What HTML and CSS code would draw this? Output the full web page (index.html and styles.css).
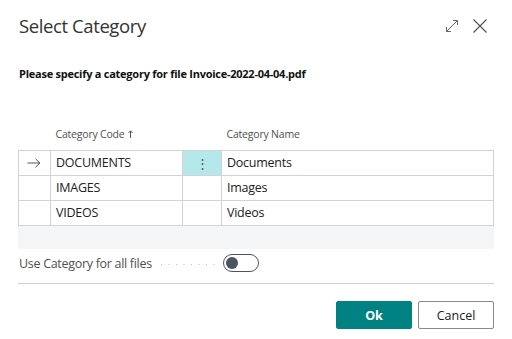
FILE: index.html
```html
<!DOCTYPE html>
<html lang="en">
<head>
    <meta charset="UTF-8">
    <meta name="viewport" content="width=device-width, initial-scale=1.0">
    <title>Select Category</title>
    <link rel="stylesheet" href="styles.css">
</head>
<body>
    <div class="dialog">
        <div class="dialog-header">
            <h1 class="title">Select Category</h1>
            <div class="header-actions">
                <!-- expand icon -->
                <svg class="icon" width="16" height="16" viewBox="0 0 16 16">
                    <path d="M2.5 13.5 L13.5 2.5 M9 2.5 H13.5 V7 M2.5 9 V13.5 H7" fill="none" stroke="#666" stroke-width="1"/>
                </svg>
                <!-- close icon -->
                <svg class="icon" width="16" height="16" viewBox="0 0 16 16">
                    <path d="M1.5 1.5 L14.5 14.5 M14.5 1.5 L1.5 14.5" fill="none" stroke="#555" stroke-width="1.2"/>
                </svg>
            </div>
        </div>

        <p class="instruction">Please specify a category for file Invoice-2022-04-04.pdf</p>

        <div class="grid-wrap">
            <table class="grid">
                <colgroup>
                    <col class="w-mark">
                    <col class="w-code">
                    <col class="w-menu">
                    <col>
                </colgroup>
                <thead>
                    <tr>
                        <th></th>
                        <th>Category Code
                            <svg class="sort" width="5" height="8" viewBox="0 0 5 8">
                                <path d="M2.5 8 V1 M0.5 3 L2.5 0.8 L4.5 3" fill="none" stroke="#555" stroke-width="1"/>
                            </svg>
                        </th>
                        <th></th>
                        <th>Category Name</th>
                    </tr>
                </thead>
                <tbody>
                    <tr>
                        <td class="mark">
                            <svg width="14" height="10" viewBox="0 0 14 10">
                                <path d="M0.5 5 H13 M8.5 0.8 L13 5 L8.5 9.2" fill="none" stroke="#555" stroke-width="1"/>
                            </svg>
                        </td>
                        <td>DOCUMENTS</td>
                        <td class="menu active"><span class="dots">&#8942;</span></td>
                        <td>Documents</td>
                    </tr>
                    <tr>
                        <td class="mark"></td>
                        <td>IMAGES</td>
                        <td class="menu"></td>
                        <td>Images</td>
                    </tr>
                    <tr>
                        <td class="mark"></td>
                        <td>VIDEOS</td>
                        <td class="menu"></td>
                        <td>Videos</td>
                    </tr>
                </tbody>
            </table>
            <div class="grid-footer"></div>
        </div>

        <div class="field">
            <span class="field-label">Use Category for all files</span>
            <span class="leader"></span>
            <span class="toggle"><span class="knob"></span></span>
        </div>

        <div class="dialog-footer">
            <button class="btn btn-primary">Ok</button>
            <button class="btn">Cancel</button>
        </div>
    </div>
</body>
</html>
```

FILE: styles.css
```css
body {
    margin: 0;
    background-color: #ffffff;
    font-family: 'Open Sans', 'Liberation Sans', sans-serif;
    color: #212121;
}

.dialog {
    width: 512px;
    height: 339px;
    padding: 0 18px;
    box-sizing: border-box;
}

.dialog-header {
    display: flex;
    justify-content: space-between;
    align-items: center;
    height: 50px;
}

.title {
    margin: 0 0 0 1px;
    font-size: 18.5px;
    font-weight: 400;
    color: #333333;
    letter-spacing: -0.4px;
}

.header-actions {
    display: flex;
    gap: 12px;
    margin-right: 6px;
    margin-top: 2px;
}

.icon {
    display: block;
}

.instruction {
    margin: 16px 0 0 1px;
    font-size: 11px;
    font-weight: 700;
    color: #111111;
    letter-spacing: -0.25px;
}

.grid-wrap {
    margin-top: 41px;
}

.grid {
    width: 476px;
    border-collapse: collapse;
    table-layout: fixed;
}

.w-mark { width: 32px; }
.w-code { width: 132px; }
.w-menu { width: 39px; }

.grid th {
    height: 24px;
    font-size: 10.5px;
    font-weight: 400;
    color: #505050;
    text-align: left;
    padding: 0 0 4px 5px;
    vertical-align: middle;
    letter-spacing: -0.2px;
}

.grid td {
    height: 24px;
    border: 1px solid #d3d3d3;
    padding: 0 0 0 5px;
    white-space: nowrap;
    font-size: 12.5px;
    line-height: 16px;
    letter-spacing: -0.25px;
    vertical-align: middle;
}

.grid td.mark {
    padding: 0 0 0 8px;
}

.mark svg {
    display: block;
}

.sort {
    margin-left: 1px;
    vertical-align: 0;
}

.grid td.active {
    background-color: #b5e8eb;
    text-align: center;
    padding: 0;
}

.dots {
    color: #555555;
    font-size: 13px;
}

.grid-footer {
    height: 23px;
    background-color: #f5f6f8;
}

.field {
    display: flex;
    align-items: center;
    height: 18px;
    margin-top: 5px;
    margin-left: 1px;
    font-size: 12.5px;
    color: #505050;
}

.field-label {
    letter-spacing: -0.3px;
}

.leader {
    width: 55px;
    height: 1px;
    margin: 3px 7px 0 9px;
    background-image: linear-gradient(to right, #b8b8b8 1px, transparent 1px);
    background-size: 7.5px 1px;
}

.toggle {
    width: 36px;
    height: 18px;
    border: 1px solid #4a5462;
    border-radius: 9px;
    display: flex;
    align-items: center;
    padding-left: 2px;
    box-sizing: border-box;
}

.knob {
    width: 12px;
    height: 12px;
    border-radius: 50%;
    background-color: #4a5462;
}

.dialog-footer {
    display: flex;
    justify-content: flex-end;
    gap: 6px;
    border-top: 1px solid #d0d0d0;
    margin-top: 11px;
    padding-top: 17px;
}

.btn {
    width: 76px;
    height: 28px;
    font-family: 'Open Sans', 'Liberation Sans', sans-serif;
    font-size: 12.5px;
    color: #212121;
    background-color: #ffffff;
    border: 1px solid #8a8a8a;
    border-radius: 2px;
    cursor: pointer;
}

.btn-primary {
    background-color: #008282;
    border-color: #008282;
    color: #ffffff;
    font-weight: 700;
}
```
